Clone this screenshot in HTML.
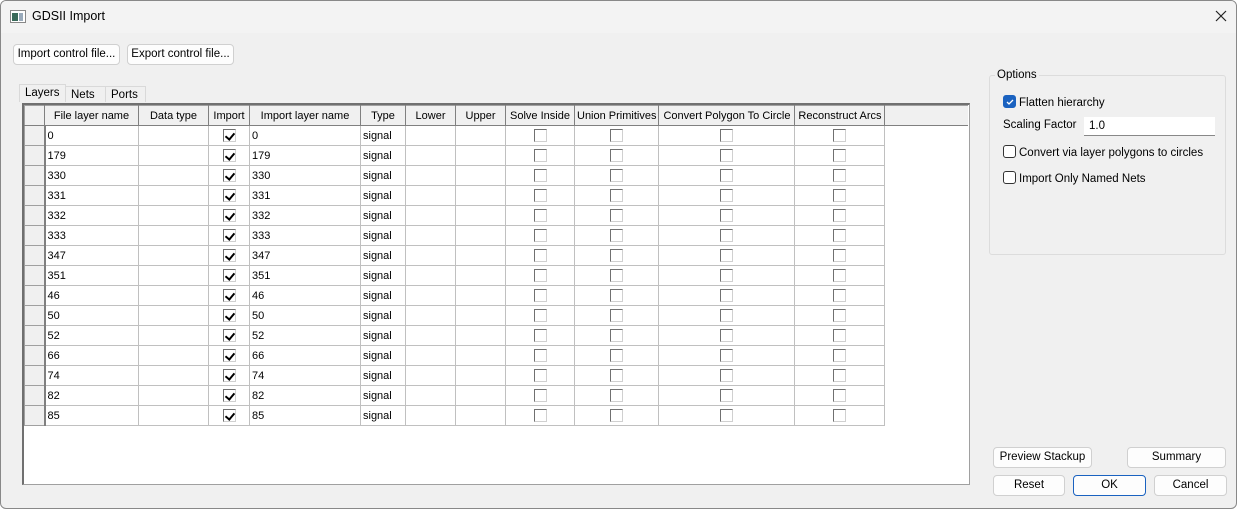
<!DOCTYPE html>
<html><head><meta charset="utf-8"><style>
*{box-sizing:border-box;margin:0;padding:0}
body{width:1237px;height:509px;background:#fff;font-family:"Liberation Sans",sans-serif;font-size:11.5px;color:#000;overflow:hidden;position:relative}
.win{position:absolute;left:0;top:0;width:1237px;height:509px;background:#f0f0f0;border:1px solid #888;border-radius:6px;overflow:hidden}
.title{position:absolute;left:0;top:0;width:100%;height:32px;background:#f3f3f3}
.title span{position:absolute;left:31px;top:8px;font-size:12.5px}
.ab{position:absolute}
.btn{position:absolute;background:#fdfdfd;border:1px solid #d0d0d0;border-radius:4px;text-align:center;font-size:11.5px;line-height:18px}
.tab{position:absolute;top:84px;height:18px;border:1px solid #d9d9d9;border-bottom:none;background:#f0f0f0;font-size:11.5px;padding-left:5px;line-height:17px}
.frame{position:absolute;left:21px;top:102px;width:948px;height:382px;background:#fff;border:1px solid #a0a0a0;border-left:2px solid #707070;border-top:2px solid #707070}
table{border-collapse:collapse;table-layout:fixed;position:absolute;left:0;top:0}
td,th{height:20px;border:1px solid #c0c0c0;font-weight:normal;white-space:nowrap;overflow:hidden;padding:0 2px;font-size:11px}
th{background:#f0f0f0;border:1px solid #a0a0a0;border-right:1px solid #808080;border-bottom:1px solid #808080;text-align:center;height:20px}
td.rh{background:#f0f0f0;border:1px solid #a0a0a0;border-right:2px solid #808080}
td.c{text-align:center}
.cb{display:inline-block;width:13px;height:13px;border:1px solid #d0d0d0;border-top-color:#707070;border-left-color:#707070;vertical-align:middle;position:relative;background:#fff}
.cb.k::after{content:"";position:absolute;left:3px;top:1px;width:4px;height:7px;border:solid #000;border-width:0 2px 2px 0;transform:rotate(40deg)}
.grp{position:absolute;left:988px;top:74px;width:237px;height:180px;border:1px solid #dcdcdc;border-radius:3px}
.rc{display:inline-block;width:13px;height:13px;border:1px solid #333;border-radius:3px;vertical-align:-2px;margin-right:3px;background:#fff}
</style></head><body><div class="win">
<div class="title"><svg class="ab" style="left:9px;top:9px" width="16" height="13"><rect x="0.5" y="0.5" width="15" height="12" fill="#fff" stroke="#888"/><rect x="2" y="3" width="6" height="8" fill="#3a6a5a"/><rect x="9" y="3" width="4" height="8" fill="#9ab"/></svg><span>GDSII Import</span>
<svg class="ab" style="left:1214px;top:9px" width="12" height="12"><path d="M1 1L11 11M11 1L1 11" stroke="#222" stroke-width="1.2"/></svg></div>
<div class="btn" style="left:12px;top:43px;width:107px;height:21px">Import control file...</div>
<div class="btn" style="left:126px;top:43px;width:107px;height:21px">Export control file...</div>
<div class="tab" style="left:64px;width:41px;top:85px;height:16px">Nets</div>
<div class="tab" style="left:104px;width:41px;top:85px;height:16px">Ports</div>
<div class="tab" style="left:18px;width:47px;top:83px;background:#f0f0f0;z-index:2">Layers</div>
<div class="frame"><table>
<colgroup><col style="width:20px"><col style="width:94px"><col style="width:70px"><col style="width:41px"><col style="width:111px"><col style="width:45px"><col style="width:50px"><col style="width:50px"><col style="width:69px"><col style="width:84px"><col style="width:136px"><col style="width:90px"><col style="width:83px"></colgroup>
<tr><th></th><th>File layer name</th><th>Data type</th><th>Import</th><th>Import layer name</th><th>Type</th><th>Lower</th><th>Upper</th><th>Solve Inside</th><th>Union Primitives</th><th>Convert Polygon To Circle</th><th>Reconstruct Arcs</th><th style="border-right:none"></th></tr>
<tr><td class="rh"></td><td>0</td><td></td><td class="c"><span class="cb k"></span></td><td>0</td><td>signal</td><td></td><td></td><td class="c"><span class="cb"></span></td><td class="c"><span class="cb"></span></td><td class="c"><span class="cb"></span></td><td class="c"><span class="cb"></span></td></tr>
<tr><td class="rh"></td><td>179</td><td></td><td class="c"><span class="cb k"></span></td><td>179</td><td>signal</td><td></td><td></td><td class="c"><span class="cb"></span></td><td class="c"><span class="cb"></span></td><td class="c"><span class="cb"></span></td><td class="c"><span class="cb"></span></td></tr>
<tr><td class="rh"></td><td>330</td><td></td><td class="c"><span class="cb k"></span></td><td>330</td><td>signal</td><td></td><td></td><td class="c"><span class="cb"></span></td><td class="c"><span class="cb"></span></td><td class="c"><span class="cb"></span></td><td class="c"><span class="cb"></span></td></tr>
<tr><td class="rh"></td><td>331</td><td></td><td class="c"><span class="cb k"></span></td><td>331</td><td>signal</td><td></td><td></td><td class="c"><span class="cb"></span></td><td class="c"><span class="cb"></span></td><td class="c"><span class="cb"></span></td><td class="c"><span class="cb"></span></td></tr>
<tr><td class="rh"></td><td>332</td><td></td><td class="c"><span class="cb k"></span></td><td>332</td><td>signal</td><td></td><td></td><td class="c"><span class="cb"></span></td><td class="c"><span class="cb"></span></td><td class="c"><span class="cb"></span></td><td class="c"><span class="cb"></span></td></tr>
<tr><td class="rh"></td><td>333</td><td></td><td class="c"><span class="cb k"></span></td><td>333</td><td>signal</td><td></td><td></td><td class="c"><span class="cb"></span></td><td class="c"><span class="cb"></span></td><td class="c"><span class="cb"></span></td><td class="c"><span class="cb"></span></td></tr>
<tr><td class="rh"></td><td>347</td><td></td><td class="c"><span class="cb k"></span></td><td>347</td><td>signal</td><td></td><td></td><td class="c"><span class="cb"></span></td><td class="c"><span class="cb"></span></td><td class="c"><span class="cb"></span></td><td class="c"><span class="cb"></span></td></tr>
<tr><td class="rh"></td><td>351</td><td></td><td class="c"><span class="cb k"></span></td><td>351</td><td>signal</td><td></td><td></td><td class="c"><span class="cb"></span></td><td class="c"><span class="cb"></span></td><td class="c"><span class="cb"></span></td><td class="c"><span class="cb"></span></td></tr>
<tr><td class="rh"></td><td>46</td><td></td><td class="c"><span class="cb k"></span></td><td>46</td><td>signal</td><td></td><td></td><td class="c"><span class="cb"></span></td><td class="c"><span class="cb"></span></td><td class="c"><span class="cb"></span></td><td class="c"><span class="cb"></span></td></tr>
<tr><td class="rh"></td><td>50</td><td></td><td class="c"><span class="cb k"></span></td><td>50</td><td>signal</td><td></td><td></td><td class="c"><span class="cb"></span></td><td class="c"><span class="cb"></span></td><td class="c"><span class="cb"></span></td><td class="c"><span class="cb"></span></td></tr>
<tr><td class="rh"></td><td>52</td><td></td><td class="c"><span class="cb k"></span></td><td>52</td><td>signal</td><td></td><td></td><td class="c"><span class="cb"></span></td><td class="c"><span class="cb"></span></td><td class="c"><span class="cb"></span></td><td class="c"><span class="cb"></span></td></tr>
<tr><td class="rh"></td><td>66</td><td></td><td class="c"><span class="cb k"></span></td><td>66</td><td>signal</td><td></td><td></td><td class="c"><span class="cb"></span></td><td class="c"><span class="cb"></span></td><td class="c"><span class="cb"></span></td><td class="c"><span class="cb"></span></td></tr>
<tr><td class="rh"></td><td>74</td><td></td><td class="c"><span class="cb k"></span></td><td>74</td><td>signal</td><td></td><td></td><td class="c"><span class="cb"></span></td><td class="c"><span class="cb"></span></td><td class="c"><span class="cb"></span></td><td class="c"><span class="cb"></span></td></tr>
<tr><td class="rh"></td><td>82</td><td></td><td class="c"><span class="cb k"></span></td><td>82</td><td>signal</td><td></td><td></td><td class="c"><span class="cb"></span></td><td class="c"><span class="cb"></span></td><td class="c"><span class="cb"></span></td><td class="c"><span class="cb"></span></td></tr>
<tr><td class="rh"></td><td>85</td><td></td><td class="c"><span class="cb k"></span></td><td>85</td><td>signal</td><td></td><td></td><td class="c"><span class="cb"></span></td><td class="c"><span class="cb"></span></td><td class="c"><span class="cb"></span></td><td class="c"><span class="cb"></span></td></tr>
</table></div>
<div class="grp"></div>
<div class="ab" style="left:994px;top:68px;background:#f0f0f0;padding:0 2px">Options</div>
<div class="ab" style="left:1002px;top:94px"><span class="rc" style="background:#1a62c0;border-color:#1a62c0;position:relative"><svg style="position:absolute;left:1px;top:1px" width="10" height="10"><path d="M2 5L4 7L8 3" stroke="#fff" fill="none" stroke-width="1.3"/></svg></span>Flatten hierarchy</div>
<div class="ab" style="left:1002px;top:118px">Scaling Factor</div>
<div class="ab" style="left:1083px;top:116px;width:131px;height:19px;background:#fff;border-bottom:1px solid #888;padding:3px 5px">1.0</div>
<div class="ab" style="left:1002px;top:144px"><span class="rc"></span>Convert via layer polygons to circles</div>
<div class="ab" style="left:1002px;top:170px"><span class="rc"></span>Import Only Named Nets</div>
<div class="btn" style="left:992px;top:446px;width:99px;height:21px">Preview Stackup</div>
<div class="btn" style="left:1126px;top:446px;width:99px;height:21px">Summary</div>
<div class="btn" style="left:992px;top:474px;width:72px;height:21px">Reset</div>
<div class="btn" style="left:1072px;top:474px;width:73px;height:21px;border-color:#1a62c0">OK</div>
<div class="btn" style="left:1153px;top:474px;width:73px;height:21px">Cancel</div>
</div></body></html>
